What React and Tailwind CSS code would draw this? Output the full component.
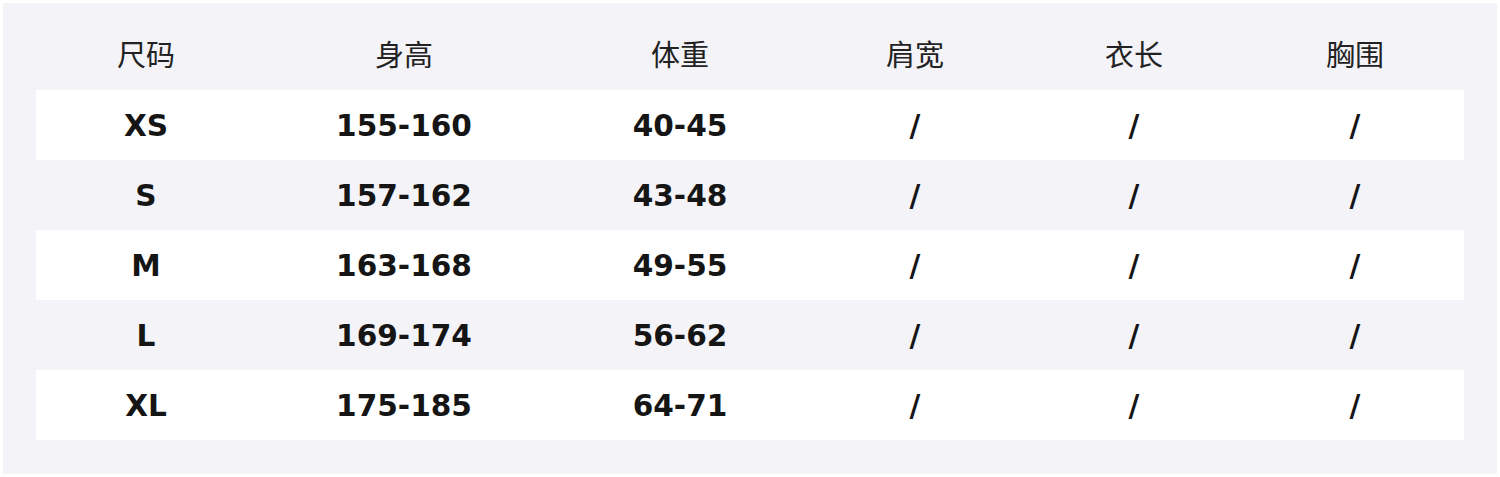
import React from "react";

const columns = ["尺码", "身高", "体重", "肩宽", "衣长", "胸围"];
const widths = ["w-[220px]", "w-[296px]", "w-[256px]", "w-[214px]", "w-[224px]", "w-[218px]"];

const rows = [
    ["XS", "155-160", "40-45", "/", "/", "/"],
    ["S", "157-162", "43-48", "/", "/", "/"],
    ["M", "163-168", "49-55", "/", "/", "/"],
    ["L", "169-174", "56-62", "/", "/", "/"],
    ["XL", "175-185", "64-71", "/", "/", "/"],
];

export default function App() {
    return (
        <div className="h-[477px] w-[1500px] bg-white p-[3px]">
            <div className="h-[471px] bg-[#f3f3f8] px-[33px] pb-[34px]">
                <div className="flex h-[87px] items-center pt-[14px] font-['Noto_Sans_CJK_SC',sans-serif] text-[29px] text-[#222]">
                    {columns.map((c, i) => (
                        <div key={c} className={`${widths[i]} text-center`}>{c}</div>
                    ))}
                </div>
                {rows.map((r, idx) => (
                    <div
                        key={r[0]}
                        className={`flex h-[70px] items-center pt-[2px] font-['DejaVu_Sans',sans-serif] text-[29.6px] font-bold text-[#151515] ${idx % 2 === 0 ? "bg-white" : ""}`}
                    >
                        {r.map((v, i) => (
                            <div key={i} className={`${widths[i]} text-center`}>{v}</div>
                        ))}
                    </div>
                ))}
            </div>
        </div>
    );
}
